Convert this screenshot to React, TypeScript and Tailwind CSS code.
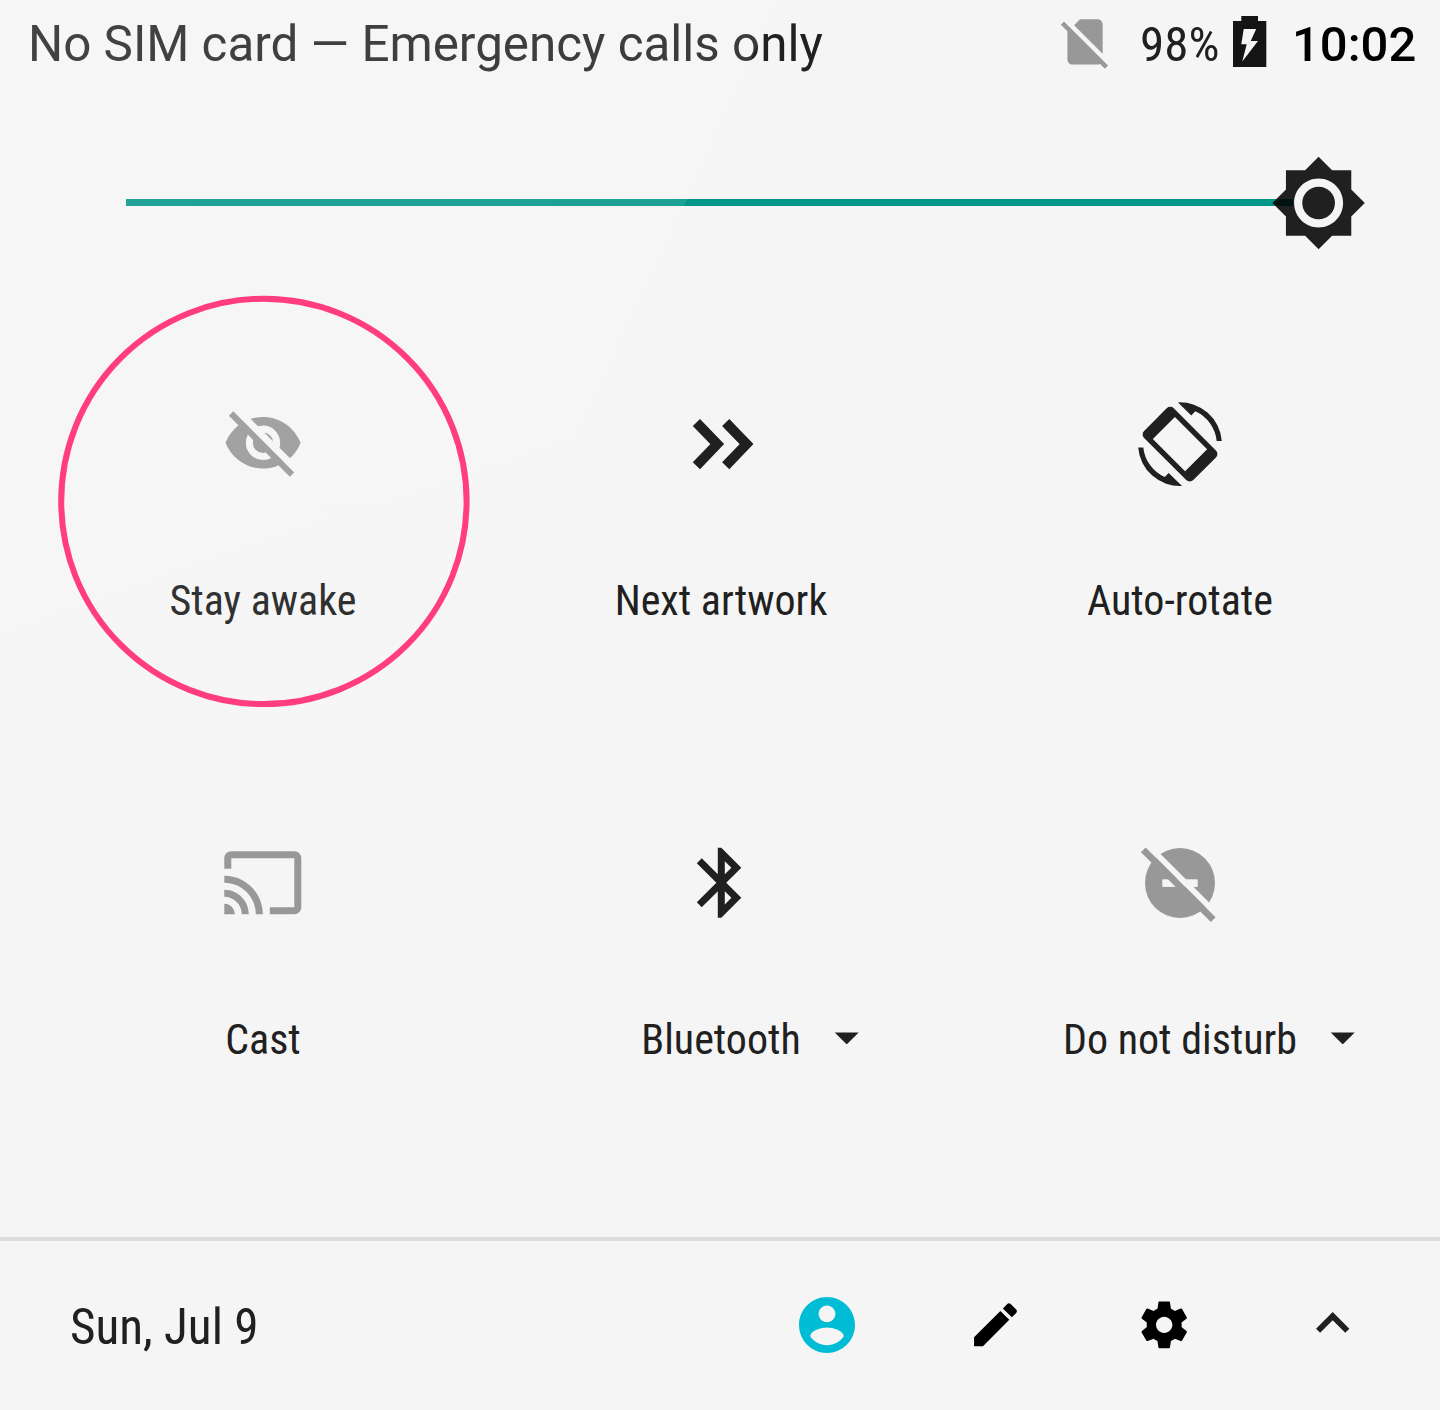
import type { ReactNode } from "react";

const INK = "rgba(0,0,0,0.87)";
const MUTED = "rgba(0,0,0,0.38)";

function EyeOff() {
  return (
    <svg className="size-24" viewBox="215 396 96 96">
      <mask id="eye-cut" maskUnits="userSpaceOnUse" x="215" y="396" width="96" height="96">
        <rect x="215" y="396" width="96" height="96" fill="#fff" />
        <circle cx="263" cy="442.8" r="13.7" fill="none" stroke="#000" strokeWidth="7" />
        <path d="M226.7 400 L306.7 480" stroke="#000" strokeWidth="7.2" />
      </mask>
      <path
        mask="url(#eye-cut)"
        fill="#989898"
        d="M263 416.9C246 416.9 231.4 427.7 225.5 442.8 231.4 457.9 246 468.6 263 468.6S294.7 457.9 300.6 442.8C294.7 427.7 280.1 416.9 263 416.9Z"
      />
      <path d="M231.1 413.5 L292 474.6" stroke="#989898" strokeWidth="6.2" />
    </svg>
  );
}

function NextArtwork() {
  return (
    <svg className="size-24" viewBox="673 396 96 96" fill="none" stroke="#202020" strokeWidth="10">
      <path d="M696.4 422.5 L717.2 444.1 L696.4 465.7" />
      <path d="M725.7 422.5 L746.5 444.1 L725.7 465.7" />
    </svg>
  );
}

function AutoRotate() {
  const arc = "M-2 -41.8 A41.8 41.8 0 0 1 41.8 -3.2 H36.7 A36.8 36.8 0 0 0 15.3 -32.9 L11.3 -28.8 Z";
  return (
    <svg className="size-24" viewBox="-48 -48.2 96 96" fill="#202020">
      <path d={arc} />
      <path d={arc} transform="rotate(180)" />
      <path
        transform="rotate(-45)"
        fillRule="evenodd"
        d="M-16 -34.8H16A5 5 0 0 1 21 -29.8V29.8A5 5 0 0 1 16 34.8H-16A5 5 0 0 1 -21 29.8V-29.8A5 5 0 0 1 -16 -34.8ZM-15.6 -22.8V22.8H15.6V-22.8Z"
      />
    </svg>
  );
}

function Cast() {
  return (
    <svg className="size-24" viewBox="215 835 96 96" fill={MUTED}>
      <path
        transform="translate(220.8 840.8) scale(3.5)"
        d="M21 3H3c-1.1 0-2 .9-2 2v3h2V5h18v14h-7v2h7c1.1 0 2-.9 2-2V5c0-1.1-.9-2-2-2zM1 18v3h3c0-1.66-1.34-3-3-3zm0-4v2c2.76 0 5 2.24 5 5h2c0-3.87-3.13-7-7-7zm0-4v2c4.97 0 9 4.03 9 9h2c0-6.08-4.93-11-11-11z"
      />
    </svg>
  );
}

function Bluetooth() {
  return (
    <svg className="size-24" viewBox="673 835 96 96" fill="#202020">
      <path
        transform="translate(679.3 840.8) scale(3.5)"
        d="M17.71 7.71L12 2h-1v7.59L6.41 5 5 6.41 10.59 12 5 17.59 6.41 19 11 14.41V22h1l5.71-5.71-4.3-4.29 4.3-4.29zM13 5.83l1.88 1.88L13 9.59V5.83zm1.88 10.46L13 18.17v-3.76l1.88 1.88z"
      />
    </svg>
  );
}

function DoNotDisturb() {
  return (
    <svg className="size-24" viewBox="1132 835 96 96">
      <mask id="dnd-cut" maskUnits="userSpaceOnUse" x="1132" y="835" width="96" height="96">
        <rect x="1132" y="835" width="96" height="96" fill="#fff" />
        <rect x="1162.3" y="879.3" width="35.4" height="7.6" fill="#000" />
        <path d="M1142.5 840 L1222.5 920" stroke="#000" strokeWidth="6" />
      </mask>
      <circle cx="1180" cy="883" r="35" fill="#989898" mask="url(#dnd-cut)" />
      <path d="M1143.3 849.8 L1213.2 919.7" stroke="#989898" strokeWidth="6.6" />
    </svg>
  );
}

function Tile({ icon, label, menu }: { icon: ReactNode; label: string; menu?: boolean }) {
  return (
    <div className="flex flex-col items-center">
      {icon}
      <div className="relative mt-[81px] text-[42px] leading-[56px] text-[#202020] font-['Roboto_Condensed',Roboto,sans-serif] [font-stretch:75%]">
        {label}
        {menu && (
          <svg className="absolute left-full top-5 ml-[34px] h-3 w-6" viewBox="0.3 -0.4 24 12" fill="#202020">
            <path d="M0 0H24L12 12Z" />
          </svg>
        )}
      </div>
    </div>
  );
}

function StatusBar() {
  return (
    <header className="flex h-[88px] items-center pl-7 text-[49px] leading-[88px] whitespace-nowrap">
      <span className="w-[1026px] text-[49.35px] text-[#202020]">No SIM card — Emergency calls only</span>
      <svg className="h-[88px] w-[86px] shrink-0" viewBox="1054 0 86 88" fill="#989898">
        <path
          transform="translate(1054.8 11.7) scale(2.52)"
          d="M18.99 5c0-1.1-.89-2-1.99-2h-7L7.66 5.34 19 16.68 18.99 5zM3.65 3.88L2.38 5.15 5 7.77V19c0 1.1.9 2 2 2h10.01c.35 0 .67-.1.96-.26l1.88 1.88 1.27-1.27L3.65 3.88z"
        />
      </svg>
      <span className="w-[91px] shrink-0 pt-px text-[#202020] font-['Roboto_Condensed',Roboto,sans-serif] [font-stretch:75%]">
        98%
      </span>
      <svg className="h-[88px] w-[61px] shrink-0" viewBox="1231 0 61 88">
        <path
          fill="#141414"
          fillRule="evenodd"
          d="M1241.3 16H1258V21H1266.3V67H1233V21H1241.3ZM1243.7 29L1241.3 44.3H1246.7L1242.3 61.5L1258 41H1250.7L1256.2 29Z"
        />
      </svg>
      <span className="shrink-0 pt-px font-medium text-black">10:02</span>
    </header>
  );
}

function BrightnessSlider() {
  return (
    <div className="relative mt-[66px] h-[98px] pl-[126px] pt-[45px]">
      <div className="h-[7px] w-[1168px] bg-[#009688]" />
      <svg className="absolute left-[1269px] top-0 size-[98px]" viewBox="-0.15 0 24 24">
        <circle cx="12" cy="12" r="6.3" fill="#f5f5f5" />
        <circle cx="12" cy="12" r="4" fill="#202020" />
        <path
          fill={INK}
          fillRule="evenodd"
          d="M20 8.69V4h-4.69L12 .69 8.69 4H4v4.69L.69 12 4 15.31V20h4.69L12 23.31 15.31 20H20v-4.69L23.31 12 20 8.69zM12 18c-3.31 0-6-2.69-6-6s2.69-6 6-6 6 2.69 6 6-2.69 6-6 6z"
        />
      </svg>
    </div>
  );
}

function Footer() {
  return (
    <footer className="flex h-[173px] items-center border-t-4 border-[#dcdcdc] pl-[70px] pr-[70px]">
      <span className="w-[723px] pt-[3px] text-[49.2px] leading-[58px] text-[#202020] font-['Roboto_Condensed',Roboto,sans-serif] [font-stretch:75%]">
        Sun, Jul 9
      </span>
      <svg className="h-[169px] w-[173px] shrink-0" viewBox="793 1241 173 169" fill="#00bcd4">
        <path
          transform="translate(793.4 1291.4) scale(2.8)"
          d="M12 2C6.48 2 2 6.48 2 12s4.48 10 10 10 10-4.48 10-10S17.52 2 12 2zm0 3c1.66 0 3 1.34 3 3s-1.34 3-3 3-3-1.34-3-3 1.34-3 3-3zm0 14.2c-2.5 0-4.71-1.28-6-3.22.03-1.99 4-3.08 6-3.08 1.99 0 5.97 1.09 6 3.08-1.29 1.94-3.5 3.22-6 3.22z"
        />
      </svg>
      <svg className="h-[169px] w-[170px] shrink-0" viewBox="966 1241 170 169">
        <path
          transform="translate(966.9 1296.2) scale(2.38)"
          d="M3 17.25V21h3.75L17.81 9.94l-3.75-3.75L3 17.25zM20.71 7.04c.39-.39.39-1.02 0-1.41l-2.34-2.34c-.39-.39-1.02-.39-1.41 0l-1.83 1.83 3.75 3.75 1.83-1.83z"
        />
      </svg>
      <svg className="h-[169px] w-[164px] shrink-0" viewBox="1136 1241 164 169">
        <path
          transform="translate(1136.2 1296.8) scale(2.333)"
          d="M19.43 12.98c.04-.32.07-.64.07-.98s-.03-.66-.07-.98l2.11-1.65c.19-.15.24-.42.12-.64l-2-3.46c-.12-.22-.39-.3-.61-.22l-2.49 1c-.52-.4-1.08-.73-1.69-.98l-.38-2.65C14.46 2.18 14.25 2 14 2h-4c-.25 0-.46.18-.49.42l-.38 2.65c-.61.25-1.17.59-1.69.98l-2.49-1c-.23-.09-.49 0-.61.22l-2 3.46c-.13.22-.07.49.12.64l2.11 1.65c-.04.32-.07.65-.07.98s.03.66.07.98l-2.11 1.65c-.19.15-.24.42-.12.64l2 3.46c.12.22.39.3.61.22l2.49-1c.52.4 1.08.73 1.69.98l.38 2.65c.03.24.24.42.49.42h4c.25 0 .46-.18.49-.42l.38-2.65c.61-.25 1.17-.59 1.69-.98l2.49 1c.23.09.49 0 .61-.22l2-3.46c.12-.22.07-.49-.12-.64l-2.11-1.65zM12 15.5c-1.93 0-3.5-1.57-3.5-3.5s1.57-3.5 3.5-3.5 3.5 1.57 3.5 3.5-1.57 3.5-3.5 3.5z"
        />
      </svg>
      <svg className="h-[169px] w-[70px] shrink-0" viewBox="1300 1241 70 169" fill="none" stroke="#202020" strokeWidth="5.8">
        <path d="M1318.1 1330.7 L1332.7 1316.1 L1347.3 1330.7" />
      </svg>
    </footer>
  );
}

/* Faint sheen falling off from the top-left corner. */
function Sheen() {
  return (
    <svg className="pointer-events-none absolute left-0 top-0 h-[868px] w-[780px]" viewBox="0 0 780 868">
      <linearGradient id="sheen" gradientUnits="userSpaceOnUse" x1="0" y1="0" x2="410" y2="1150">
        <stop offset="0" stopColor="#fff" stopOpacity="0.161" />
        <stop offset="1" stopColor="#fff" stopOpacity="0" />
      </linearGradient>
      <path d="M0 0H778L485 645L0 868Z" fill="url(#sheen)" />
    </svg>
  );
}

export default function App() {
  return (
    <div className="relative flex h-[1410px] w-[1440px] flex-col overflow-hidden bg-[#f5f5f5] font-[Roboto,sans-serif]">
      <StatusBar />
      <BrightnessSlider />
      <main className="ml-[34px] mt-36 grid grow grid-cols-[458px_458px_460px] content-start gap-y-[206px]">
        <Tile icon={<EyeOff />} label="Stay awake" />
        <Tile icon={<NextArtwork />} label="Next artwork" />
        <Tile icon={<AutoRotate />} label="Auto-rotate" />
        <Tile icon={<Cast />} label="Cast" />
        <Tile icon={<Bluetooth />} label="Bluetooth" menu />
        <Tile icon={<DoNotDisturb />} label="Do not disturb" menu />
      </main>
      <Footer />
      <Sheen />
      <svg className="absolute left-[54px] top-[292px] size-[420px]" viewBox="54 292 420 420" fill="none" stroke="#ff3d7f" strokeWidth="6">
        <circle cx="263.9" cy="501.4" r="202.7" />
      </svg>
    </div>
  );
}
